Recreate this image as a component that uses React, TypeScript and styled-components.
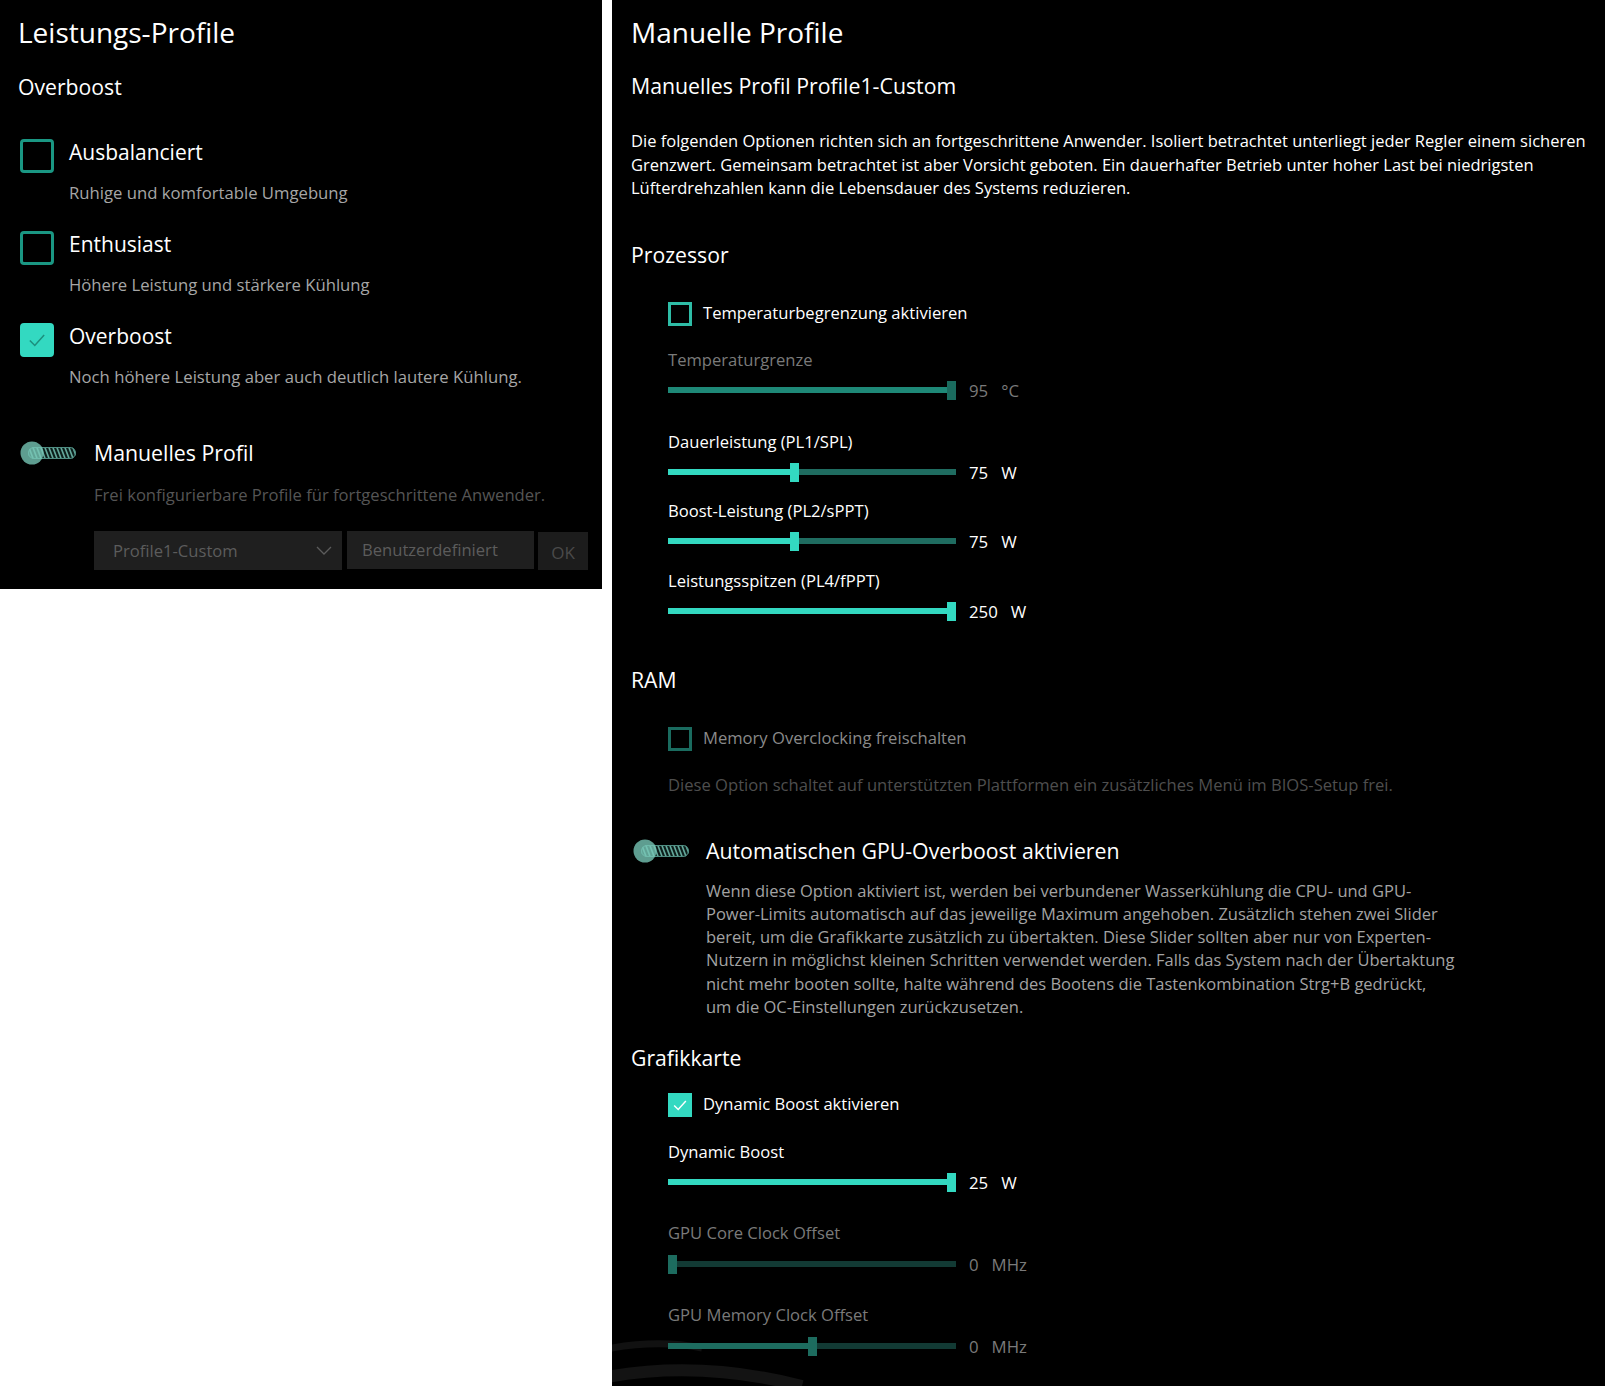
import React from 'react';
import styled, { createGlobalStyle } from 'styled-components';

const TEAL = '#33d9c1';

const GlobalStyle = createGlobalStyle`
  html, body {
    margin: 0;
    padding: 0;
    background: #ffffff;
  }

  body {
    font-family: 'Open Sans', 'Noto Sans', sans-serif;
    color: #ffffff;
  }
`;

const Page = styled.div`
  display: flex;
  align-items: flex-start;
  gap: 10px;
  width: 1605px;
  height: 1386px;
`;

/* ---------- shared text ---------- */

const Title = styled.h1`
  margin: 12px 0 0;
  font-size: 28px;
  font-weight: 400;
  line-height: 40px;
  white-space: nowrap;
`;

const Heading = styled.h2<{ $top: number }>`
  margin: ${(p) => p.$top}px 0 0;
  font-size: 21.2px;
  font-weight: 400;
  line-height: 30px;
  white-space: nowrap;
`;

const Note = styled.div<{ $top: number; $color: string; $indent?: number }>`
  margin: ${(p) => p.$top}px 0 0 ${(p) => p.$indent ?? 0}px;
  font-size: 16.6px;
  line-height: 24px;
  color: ${(p) => p.$color};
  white-space: nowrap;
`;

/* ---------- left panel ---------- */

const LeftPanel = styled.section`
  box-sizing: border-box;
  width: 602px;
  height: 589px;
  padding-left: 18px;
  background: #000;
  display: flex;
  flex-direction: column;
`;

const OptionList = styled.div`
  margin-top: 37px;
  display: flex;
  flex-direction: column;
  gap: 26px;
`;

const Option = styled.div`
  display: grid;
  grid-template-columns: 34px 1fr;
  column-gap: 15px;
  row-gap: 8px;
  margin-left: 2px;
`;

const BigBox = styled.span<{ $checked?: boolean }>`
  box-sizing: border-box;
  width: 34px;
  height: 34px;
  border-radius: 4px;
  border: 3px solid ${(p) => (p.$checked ? TEAL : '#1a9783')};
  background: ${(p) => (p.$checked ? TEAL : 'transparent')};
  display: flex;
  align-items: center;
  justify-content: center;
`;

const OptionLabel = styled.span`
  font-size: 21px;
  line-height: 26px;
  white-space: nowrap;
`;

const OptionDesc = styled.span`
  grid-column: 2;
  font-size: 16.7px;
  line-height: 24px;
  color: #a6a6a6;
  white-space: nowrap;
`;

const ToggleRow = styled.div<{ $top: number; $gap: number }>`
  margin: ${(p) => p.$top}px 0 0 2px;
  height: 30px;
  display: flex;
  align-items: center;
  gap: ${(p) => p.$gap}px;
`;

const ToggleLabel = styled.span`
  font-size: 21.3px;
  line-height: 30px;
  white-space: nowrap;
`;

const Controls = styled.div`
  margin: 24px 0 0 76px;
  display: flex;
  align-items: flex-start;
  gap: 5px;
`;

const Combo = styled.div`
  box-sizing: border-box;
  width: 248px;
  height: 39px;
  padding: 0 10px 0 19px;
  background: #1f1f1f;
  color: #5c5c5c;
  font-size: 16.6px;
  display: flex;
  align-items: center;
  justify-content: space-between;
`;

const TextBox = styled.div`
  box-sizing: border-box;
  width: 187px;
  height: 38px;
  padding-left: 15px;
  background: #1f1f1f;
  color: #5c5c5c;
  font-size: 16.6px;
  line-height: 37px;
`;

const OkButton = styled.div`
  width: 50px;
  height: 38px;
  margin-top: 1px;
  margin-left: -1px;
  background: #1c1c1c;
  color: #4a4a4a;
  font-size: 17px;
  display: flex;
  align-items: center;
  justify-content: center;
  padding-top: 3px;
  box-sizing: border-box;
`;

/* ---------- right panel ---------- */

const RightPanel = styled.section`
  position: relative;
  box-sizing: border-box;
  width: 993px;
  height: 1386px;
  padding-left: 19px;
  background: #000;
  overflow: hidden;
`;

const SubTitle = styled.h2`
  margin: 19px 0 0;
  font-size: 21.3px;
  font-weight: 400;
  line-height: 30px;
  white-space: nowrap;
`;

const Paragraph = styled.p<{ $top: number; $color: string; $indent?: number; $lh: number }>`
  margin: ${(p) => p.$top}px 0 0 ${(p) => p.$indent ?? 0}px;
  font-size: 16.5px;
  line-height: ${(p) => p.$lh}px;
  color: ${(p) => p.$color};
  white-space: nowrap;
`;

const Indent = styled.div`
  padding-left: 37px;
  display: flex;
  flex-direction: column;
`;

const CheckRow = styled.label<{ $top: number }>`
  margin-top: ${(p) => p.$top}px;
  height: 24px;
  display: flex;
  align-items: center;
  gap: 11px;
`;

const SmallBox = styled.span<{ $state: 'on' | 'off' | 'disabled' }>`
  box-sizing: border-box;
  width: 24px;
  height: 24px;
  border: 3px solid
    ${(p) => (p.$state === 'disabled' ? '#1a6b5f' : p.$state === 'on' ? TEAL : '#2ebca6')};
  background: ${(p) => (p.$state === 'on' ? TEAL : 'transparent')};
  display: flex;
  align-items: center;
  justify-content: center;
`;

const CheckText = styled.span<{ $dim?: boolean }>`
  font-size: 16.6px;
  line-height: 24px;
  margin-top: -2px;
  color: ${(p) => (p.$dim ? '#8a8a8a' : '#ffffff')};
  white-space: nowrap;
`;

const SliderLabel = styled.div<{ $top: number; $dim?: boolean }>`
  margin-top: ${(p) => p.$top}px;
  font-size: 16.6px;
  line-height: 24px;
  color: ${(p) => (p.$dim ? '#7a7a7a' : '#ffffff')};
  white-space: nowrap;
`;

const SliderRow = styled.div<{ $top: number }>`
  margin-top: ${(p) => p.$top}px;
  height: 20px;
  display: flex;
  align-items: center;
`;

const Track = styled.div<{ $rest: string }>`
  position: relative;
  width: 288px;
  height: 6px;
  background: ${(p) => p.$rest};
`;

const Fill = styled.div<{ $color: string }>`
  height: 100%;
  background: ${(p) => p.$color};
`;

const Thumb = styled.div<{ $color: string }>`
  position: absolute;
  top: -6px;
  width: 9px;
  height: 19px;
  background: ${(p) => p.$color};
`;

const Reading = styled.span<{ $dim?: boolean }>`
  margin-left: 13px;
  font-size: 16.8px;
  line-height: 20px;
  padding-top: 2px;
  color: ${(p) => (p.$dim ? '#7a7a7a' : '#ffffff')};
`;

const Backdrop = styled.svg`
  position: absolute;
  left: 0;
  bottom: 0;
  pointer-events: none;
`;

const Content = styled.div`
  position: relative;
  display: flex;
  flex-direction: column;
`;

/* ---------- drawings ---------- */

function Toggle() {
  return (
    <svg width="57" height="24" viewBox="0 0 57 24">
      <defs>
        <clipPath id="tg-track">
          <rect x="8" y="6" width="48" height="12" rx="6" />
        </clipPath>
      </defs>
      <rect x="8" y="6" width="48" height="12" rx="6" fill="#0c1d1a" />
      <g clipPath="url(#tg-track)" stroke="#64a89b" strokeWidth="1.6">
        {Array.from({ length: 14 }).map((_, i) => (
          <line key={i} x1={4 + i * 4} y1="4" x2={10 + i * 4} y2="20" />
        ))}
      </g>
      <rect x="8.5" y="6.5" width="47" height="11" rx="5.5" fill="none" stroke="#4f8d82" strokeWidth="1" />
      <circle cx="12" cy="12" r="11.5" fill="#79c9b9" opacity="0.78" />
    </svg>
  );
}

function Tick({ color, size, width }: { color: string; size: number; width: number }) {
  return (
    <svg width={size} height={size} viewBox="0 0 20 20">
      <path d="M3.5 10.5 L8 15 L16.5 5.5" fill="none" stroke={color} strokeWidth={width} />
    </svg>
  );
}

function Chevron() {
  return (
    <svg width="16" height="9" viewBox="0 0 16 9">
      <path d="M1 1 L8 8 L15 1" fill="none" stroke="#5c5c5c" strokeWidth="1.3" />
    </svg>
  );
}

type Variant = 'on' | 'muted' | 'off';

const palette: Record<Variant, { fill: string; rest: string; thumb: string }> = {
  on: { fill: TEAL, rest: '#1f6c60', thumb: TEAL },
  muted: { fill: '#1e8877', rest: '#1e8877', thumb: '#1a6b5e' },
  off: { fill: '#1d6c5f', rest: '#123a34', thumb: '#1d6c5f' },
};

interface SliderProps {
  label: string;
  labelTop: number;
  rowTop: number;
  at: number;
  value: string;
  unit: string;
  variant: Variant;
}

function Slider({ label, labelTop, rowTop, at, value, unit, variant }: SliderProps) {
  const c = palette[variant];
  const dim = variant !== 'on';
  return (
    <>
      <SliderLabel $top={labelTop} $dim={dim}>{label}</SliderLabel>
      <SliderRow $top={rowTop}>
        <Track $rest={c.rest}>
          <Fill $color={c.fill} style={{ width: `calc(${at} * (100% - 9px) + 4px)` }} />
          <Thumb $color={c.thumb} style={{ left: `calc(${at} * (100% - 9px))` }} />
        </Track>
        <Reading $dim={dim}>{value}</Reading>
        <Reading $dim={dim}>{unit}</Reading>
      </SliderRow>
    </>
  );
}

const profiles = [
  { label: 'Ausbalanciert', desc: 'Ruhige und komfortable Umgebung', checked: false },
  { label: 'Enthusiast', desc: 'Höhere Leistung und stärkere Kühlung', checked: false },
  { label: 'Overboost', desc: 'Noch höhere Leistung aber auch deutlich lautere Kühlung.', checked: true },
];

const intro = [
  'Die folgenden Optionen richten sich an fortgeschrittene Anwender. Isoliert betrachtet unterliegt jeder Regler einem sicheren',
  'Grenzwert. Gemeinsam betrachtet ist aber Vorsicht geboten. Ein dauerhafter Betrieb unter hoher Last bei niedrigsten',
  'Lüfterdrehzahlen kann die Lebensdauer des Systems reduzieren.',
];

const gpuText = [
  'Wenn diese Option aktiviert ist, werden bei verbundener Wasserkühlung die CPU- und GPU-',
  'Power-Limits automatisch auf das jeweilige Maximum angehoben. Zusätzlich stehen zwei Slider',
  'bereit, um die Grafikkarte zusätzlich zu übertakten. Diese Slider sollten aber nur von Experten-',
  'Nutzern in möglichst kleinen Schritten verwendet werden. Falls das System nach der Übertaktung',
  'nicht mehr booten sollte, halte während des Bootens die Tastenkombination Strg+B gedrückt,',
  'um die OC-Einstellungen zurückzusetzen.',
];

function lines(list: string[]) {
  return list.map((l, i) => (
    <React.Fragment key={i}>
      {l}
      {i < list.length - 1 && <br />}
    </React.Fragment>
  ));
}

export default function App() {
  return (
    <>
      <GlobalStyle />
      <Page>
        <LeftPanel>
          <Title>Leistungs-Profile</Title>
          <Heading $top={20}>Overboost</Heading>
          <OptionList>
            {profiles.map((p) => (
              <Option key={p.label}>
                <BigBox $checked={p.checked}>
                  {p.checked && <Tick color="#1d8f7d" size={22} width={1.4} />}
                </BigBox>
                <OptionLabel>{p.label}</OptionLabel>
                <OptionDesc>{p.desc}</OptionDesc>
              </Option>
            ))}
          </OptionList>
          <ToggleRow $top={49} $gap={17}>
            <Toggle />
            <ToggleLabel>Manuelles Profil</ToggleLabel>
          </ToggleRow>
          <Note $top={15} $indent={76} $color="#555555">
            Frei konfigurierbare Profile für fortgeschrittene Anwender.
          </Note>
          <Controls>
            <Combo>
              <span>Profile1-Custom</span>
              <Chevron />
            </Combo>
            <TextBox>Benutzerdefiniert</TextBox>
            <OkButton>OK</OkButton>
          </Controls>
        </LeftPanel>

        <RightPanel>
          <Backdrop width="200" height="50" viewBox="0 0 200 50">
            <path d="M-20 16 Q 40 2 90 12" fill="none" stroke="#111111" strokeWidth="7" />
            <path d="M-20 44 Q 80 22 190 50" fill="none" stroke="#131313" strokeWidth="12" />
          </Backdrop>
          <Content>
            <Title>Manuelle Profile</Title>
            <SubTitle>Manuelles Profil Profile1-Custom</SubTitle>
            <Paragraph $top={28} $lh={23.5} $color="#ffffff">
              {lines(intro)}
            </Paragraph>

            <Heading $top={40}>Prozessor</Heading>
            <Indent>
              <CheckRow $top={32}>
                <SmallBox $state="off" />
                <CheckText>Temperaturbegrenzung aktivieren</CheckText>
              </CheckRow>
              <Slider label="Temperaturgrenze" labelTop={22} rowTop={8} at={1} value="95" unit="°C" variant="muted" />
              <Slider label="Dauerleistung (PL1/SPL)" labelTop={30} rowTop={8} at={0.436} value="75" unit="W" variant="on" />
              <Slider label="Boost-Leistung (PL2/sPPT)" labelTop={17} rowTop={8} at={0.436} value="75" unit="W" variant="on" />
              <Slider label="Leistungsspitzen (PL4/fPPT)" labelTop={18} rowTop={8} at={1} value="250" unit="W" variant="on" />
            </Indent>

            <Heading $top={44}>RAM</Heading>
            <Indent>
              <CheckRow $top={32}>
                <SmallBox $state="disabled" />
                <CheckText $dim>Memory Overclocking freischalten</CheckText>
              </CheckRow>
              <Note $top={22} $color="#4e4e4e">
                Diese Option schaltet auf unterstützten Plattformen ein zusätzliches Menü im BIOS-Setup frei.
              </Note>
            </Indent>

            <ToggleRow $top={39} $gap={16}>
              <Toggle />
              <ToggleLabel>Automatischen GPU-Overboost aktivieren</ToggleLabel>
            </ToggleRow>
            <Paragraph $top={13} $indent={75} $lh={23.3} $color="#a3a3a3">
              {lines(gpuText)}
            </Paragraph>

            <Heading $top={25}>Grafikkarte</Heading>
            <Indent>
              <CheckRow $top={20}>
                <SmallBox $state="on">
                  <Tick color="#ffffff" size={20} width={1.6} />
                </SmallBox>
                <CheckText>Dynamic Boost aktivieren</CheckText>
              </CheckRow>
              <Slider label="Dynamic Boost" labelTop={23} rowTop={8} at={1} value="25" unit="W" variant="on" />
              <Slider label="GPU Core Clock Offset" labelTop={29} rowTop={9} at={0} value="0" unit="MHz" variant="off" />
              <Slider label="GPU Memory Clock Offset" labelTop={29} rowTop={9} at={0.5} value="0" unit="MHz" variant="off" />
            </Indent>
          </Content>
        </RightPanel>
      </Page>
    </>
  );
}
